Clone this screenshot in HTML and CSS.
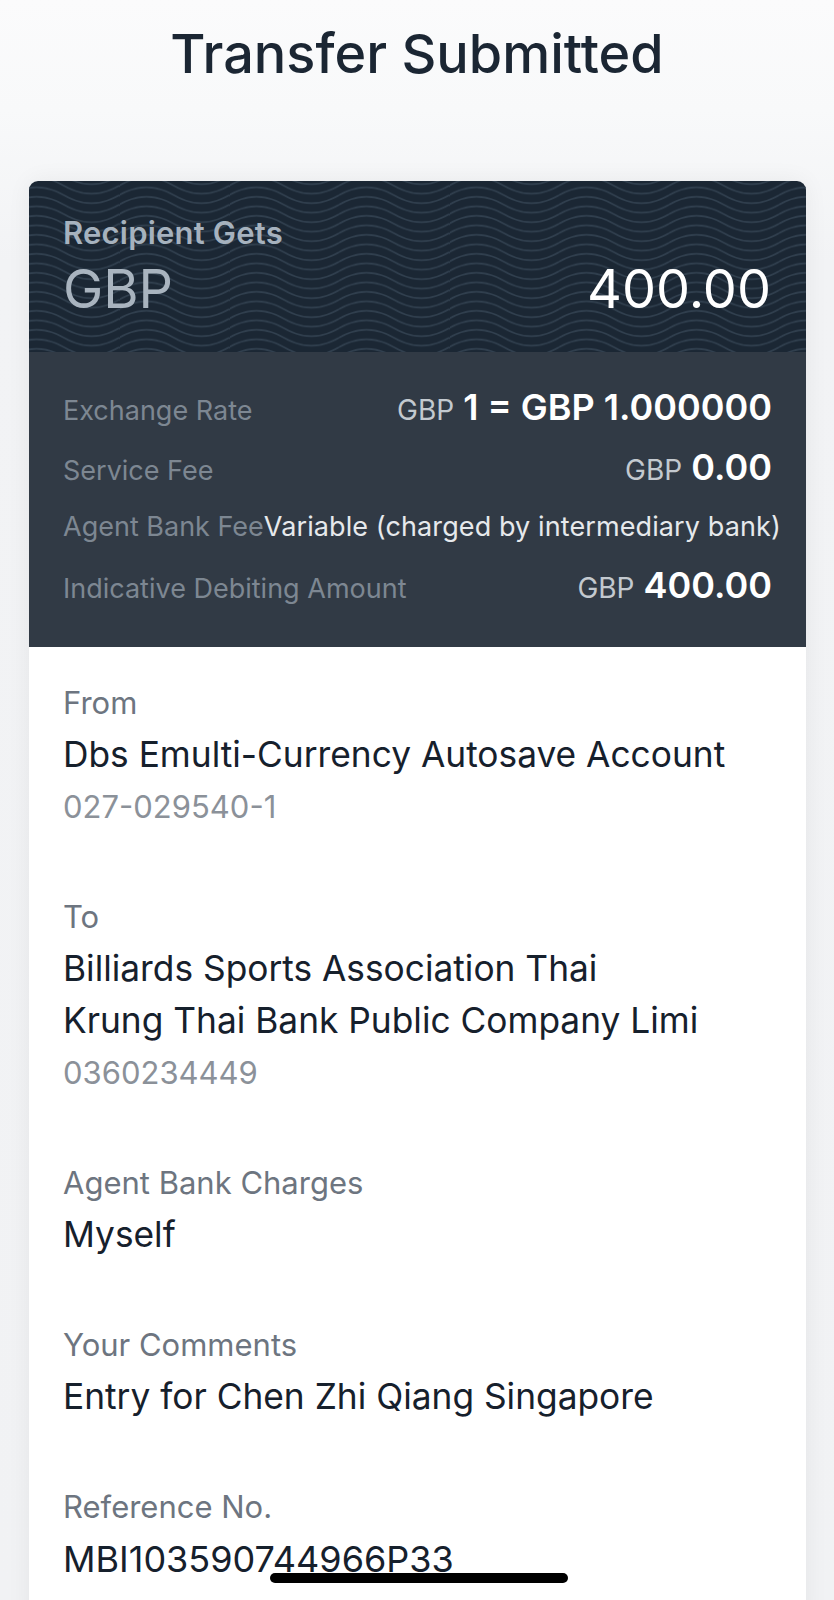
FILE: index.html
```html
<!DOCTYPE html>
<html lang="en">
<head>
<meta charset="utf-8">
<title>Transfer Submitted</title>
<link rel="stylesheet" href="styles.css">
</head>
<body>
<div class="screen">
  <h1 class="title">Transfer Submitted</h1>
  <div class="card">
    <div class="hero">
      <svg class="waves" xmlns="http://www.w3.org/2000/svg" width="100%" height="100%" aria-hidden="true">
        <defs>
          <pattern id="wave" width="110" height="9.5" patternUnits="userSpaceOnUse" x="-20" y="0">
            <path d="M0 -4.75 Q27.5 -20.75 55 -4.75 T110 -4.75 M0 4.75 Q27.5 -11.25 55 4.75 T110 4.75 M0 14.25 Q27.5 -1.75 55 14.25 T110 14.25" fill="none" stroke="#31404f" stroke-width="1.5"/>
          </pattern>
        </defs>
        <rect width="100%" height="100%" fill="url(#wave)"/>
      </svg>
      <div class="hero-label">Recipient Gets</div>
      <div class="hero-amount"><span class="cur">GBP</span><span class="amt">400.00</span></div>
    </div>
    <div class="summary">
      <div class="row first"><span class="k">Exchange Rate</span><span class="v"><small>GBP</small> 1 = GBP 1.000000</span></div>
      <div class="row"><span class="k">Service Fee</span><span class="v"><small>GBP</small> 0.00</span></div>
      <div class="row"><span class="k">Agent Bank Fee</span><span class="v plain">Variable (charged by intermediary bank)</span></div>
      <div class="row"><span class="k">Indicative Debiting Amount</span><span class="v"><small>GBP</small> 400.00</span></div>
    </div>
    <div class="details">
      <div class="group">
        <div class="lbl">From</div>
        <div class="val">Dbs Emulti-Currency Autosave Account</div>
        <div class="sub">027-029540-1</div>
      </div>
      <div class="group">
        <div class="lbl">To</div>
        <div class="val">Billiards Sports Association Thai</div>
        <div class="val">Krung Thai Bank Public Company Limi</div>
        <div class="sub">0360234449</div>
      </div>
      <div class="group">
        <div class="lbl">Agent Bank Charges</div>
        <div class="val">Myself</div>
      </div>
      <div class="group">
        <div class="lbl">Your Comments</div>
        <div class="val">Entry for Chen Zhi Qiang Singapore</div>
      </div>
      <div class="group">
        <div class="lbl">Reference No.</div>
        <div class="val ref">MBI103590744966P33</div>
      </div>
    </div>
  </div>
  <div class="home"></div>
</div>
</body>
</html>
```
FILE: styles.css
```css
html, body {
  margin: 0;
  padding: 0;
}
body {
  background: linear-gradient(#fbfbfc 0, #f8f9fa 110px, #f2f3f5 260px, #f1f2f4 100%);
  font-family: Inter, "Noto Sans", sans-serif;
}
.screen {
  position: relative;
  height: 1600px;
  overflow: hidden;
}
.title {
  margin: 0;
  padding-top: 22px;
  height: 64px;
  font-size: 54px;
  line-height: 64px;
  font-weight: 500;
  text-align: center;
  color: #1b2633;
}
.card {
  margin: 95px 28px 0 29px;
  border-radius: 9px;
  overflow: hidden;
  background: #fff;
  box-shadow: 0 0 24px rgba(20, 30, 40, 0.06);
}
.hero {
  position: relative;
  height: 171px;
  box-sizing: border-box;
  padding: 34px 35px 0 34px;
  background: #1b2734;
}
.waves {
  position: absolute;
  left: 0;
  top: 0;
}
.hero-label,
.hero-amount {
  position: relative;
}
.hero-label {
  font-size: 31px;
  line-height: 36px;
  font-weight: 600;
  letter-spacing: 0.2px;
  color: #a6b2be;
}
.hero-amount {
  display: flex;
  justify-content: space-between;
  margin-top: 6px;
  font-size: 54px;
  line-height: 64px;
}
.cur {
  color: #a9b4bf;
}
.amt {
  color: #ffffff;
}
.summary {
  background: #313a45;
  padding: 24px 34px 32px;
}
.row {
  display: flex;
  justify-content: space-between;
  align-items: baseline;
  height: 59px;
  line-height: 59px;
}
.row.first {
  height: 62px;
  line-height: 62px;
}
.k {
  font-size: 27px;
  color: #7d8792;
  white-space: nowrap;
}
.v {
  font-size: 36px;
  font-weight: 600;
  color: #ffffff;
  white-space: nowrap;
}
.v small {
  font-size: 28px;
  font-weight: 400;
  color: #c3c9cf;
}
.v.plain {
  font-size: 27px;
  font-weight: 400;
  letter-spacing: 0.1px;
  color: #e6e9ec;
}
.details {
  padding: 30px 34px 40px;
}
.group + .group {
  margin-top: 58px;
}
.lbl {
  font-size: 31px;
  line-height: 52px;
  color: #6d7580;
}
.val {
  font-size: 35.3px;
  line-height: 52px;
  color: #16202c;
}
.val.ref {
  font-size: 36px;
}
.sub {
  font-size: 31px;
  line-height: 52px;
  color: #8b9199;
}
.home {
  position: absolute;
  left: 270px;
  top: 1573px;
  width: 298px;
  height: 10px;
  border-radius: 5px;
  background: #000;
}
```
